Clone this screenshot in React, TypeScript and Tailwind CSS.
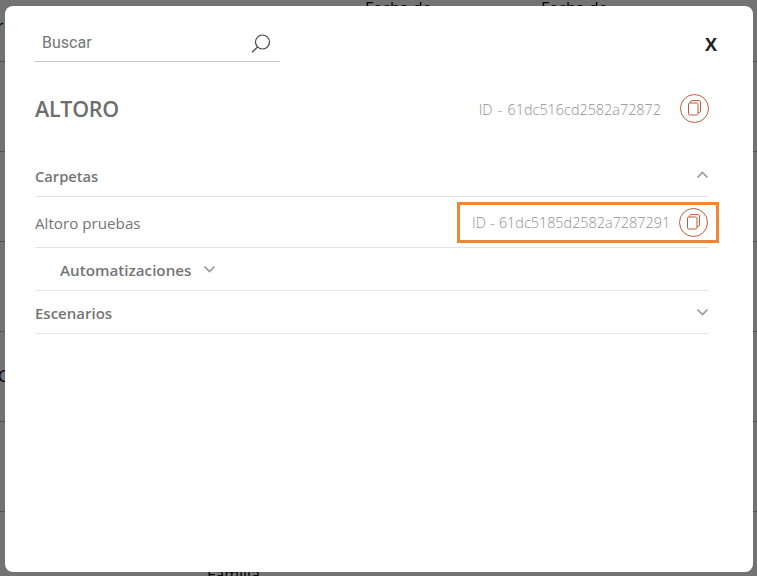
const SANS = "font-['Open_Sans','Liberation_Sans',sans-serif]";

const Chevron = ({ up = false }: { up?: boolean }) => (
  <svg width="13" height="8" viewBox="0 0 13 8" fill="none" className="shrink-0">
    <path
      d={up ? "M1.5 6.5L6.5 1.5L11.5 6.5" : "M1.5 1.5L6.5 6.5L11.5 1.5"}
      stroke="#9a9a9a"
      strokeWidth="1.7"
    />
  </svg>
);

const CopyButton = () => (
  <button
    type="button"
    className="flex h-[29px] w-[29px] shrink-0 items-center justify-center rounded-full border border-[#c1593c]"
  >
    <svg width="15" height="16" viewBox="0 0 15 16" fill="none" stroke="#c1593c" strokeWidth="1">
      <rect x="1.5" y="3" width="9.5" height="12" rx="1.2" />
      <path d="M3.5 3V1.8C3.5 1.1 4 .6 4.7.6h7.6c.7 0 1.2.5 1.2 1.2v9.4c0 .7-.5 1.2-1.2 1.2H11" />
    </svg>
  </button>
);

const SearchIcon = () => (
  <svg width="20" height="19" viewBox="0 0 20 19" fill="none" stroke="#444444" strokeWidth="1.2">
    <circle cx="11.5" cy="8" r="7" />
    <path d="M6.5 13L1 18.3" />
  </svg>
);

const Background = () => (
  <div className="text-[16px] leading-[20px] text-black">
    <div className="flex h-[62px] border-b border-[#b5b5b5]">
      <span className="-ml-[3px] mt-[16px] w-[368px]">r</span>
      <span className="-mt-[2px] w-[176px]">Fecha de</span>
      <span className="-mt-[2px]">Fecha de</span>
    </div>
    <div className="h-[90px] border-b border-[#b5b5b5]" />
    <div className="h-[90px] border-b border-[#b5b5b5]" />
    <div className="h-[90px] border-b border-[#b5b5b5]" />
    <div className="h-[90px] border-b border-[#b5b5b5] pt-[34px]">
      <span className="-ml-[2px] block">C</span>
    </div>
    <div className="h-[90px] border-b border-[#b5b5b5]" />
    <div className="pl-[207px] pt-[52px]">Familia</div>
  </div>
);

export default function App() {
  return (
    <div className={`relative h-[576px] w-[757px] overflow-hidden bg-white ${SANS}`}>
      <Background />
      <div className="absolute inset-0 bg-black/55" />
      <div className="absolute left-[5px] top-[6px] h-[566px] w-[748px] rounded-lg bg-white pl-[30px] pr-[44px]">
        <div className="flex items-start justify-between pt-[19px]">
          <div className="flex h-[37px] w-[245px] items-center justify-between border-b border-[#c4c4c4] pl-[7px] pr-[9px]">
            <span className="font-['Roboto','Liberation_Sans',sans-serif] text-[16px] text-[#757575]">Buscar</span>
            <SearchIcon />
          </div>
          <button type="button" className="-mr-[8px] mt-[7px] text-[18px] leading-[24px] font-bold text-[#222222]">
            X
          </button>
        </div>

        <div className="mt-[25px] flex h-[46px] items-center justify-between">
          <h1 className="-translate-y-[1px] text-[21.5px] font-semibold tracking-[-0.3px] text-[#6e6e6e]">ALTORO</h1>
          <div className="flex items-center gap-[19px]">
            <span className="text-[14.4px] font-light text-[#8f8f8f] [word-spacing:1.5px]">ID - 61dc516cd2582a72872</span>
            <div className="-translate-y-[2px]">
              <CopyButton />
            </div>
          </div>
        </div>

        <div className="mt-[21px] flex h-[43px] items-center justify-between border-b border-[#e4e4e4] text-[14.7px] font-semibold text-[#757575]">
          <span className="translate-y-[1px]">Carpetas</span>
          <Chevron up />
        </div>

        <div className="flex h-[51px] items-center justify-between border-b border-[#e4e4e4] text-[15.2px] text-[#757575]">
          <span className="translate-y-[1px]">Altoro pruebas</span>
          <div className="-mr-[10px] flex h-[41px] w-[262px] items-center justify-between border-[3px] border-[#ee8636] pl-[12px] pr-[8px]">
            <span className="translate-y-[1px] text-[14.4px] font-light text-[#8f8f8f] [word-spacing:0.5px]">ID - 61dc5185d2582a7287291</span>
            <CopyButton />
          </div>
        </div>

        <div className="flex h-[43px] items-center gap-[12px] border-b border-[#e4e4e4] pl-[25px] text-[15.2px] font-semibold text-[#757575]">
          <span className="translate-y-[1px]">Automatizaciones</span>
          <Chevron />
        </div>

        <div className="flex h-[43px] items-center justify-between border-b border-[#e4e4e4] text-[15px] font-semibold text-[#757575]">
          <span className="translate-y-[1px]">Escenarios</span>
          <Chevron />
        </div>
      </div>
    </div>
  );
}
